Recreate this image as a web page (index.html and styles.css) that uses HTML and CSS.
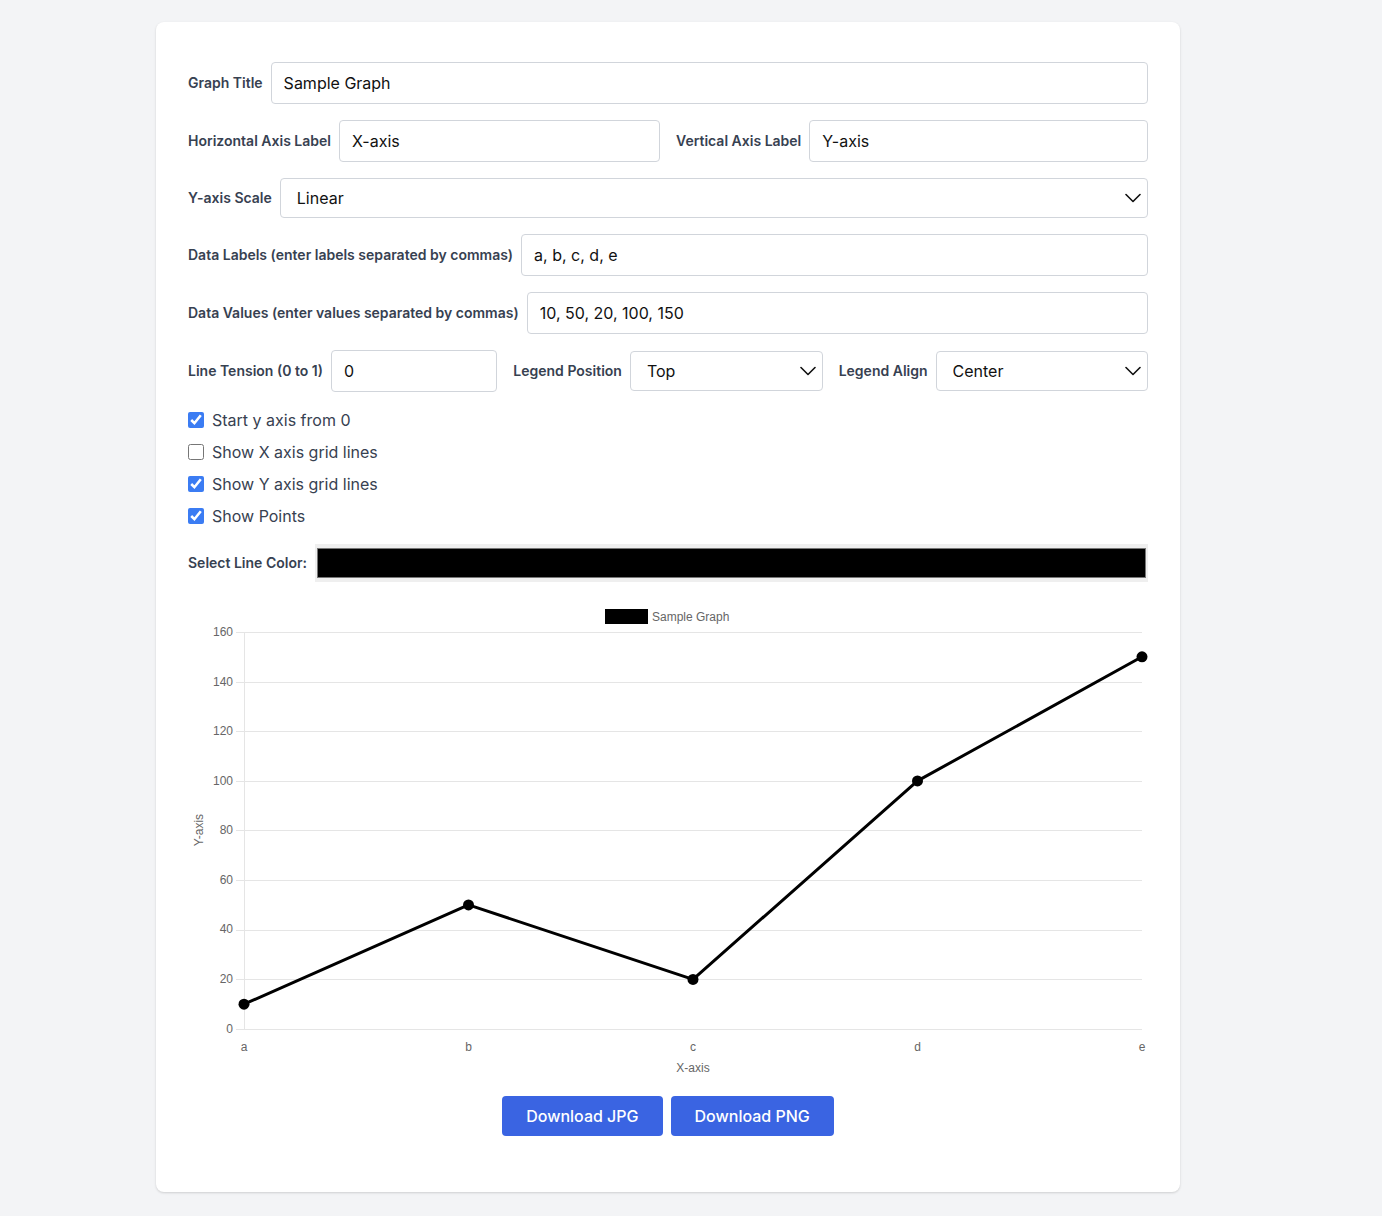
FILE: index.html
```html
<!DOCTYPE html>
<html lang="en">
<head>
<meta charset="utf-8">
<title>Graph Maker</title>
<link rel="stylesheet" href="styles.css">
</head>
<body>
<main class="card">
  <div class="row">
    <label class="lbl" for="title">Graph Title</label>
    <input class="field" id="title" type="text" value="Sample Graph">
  </div>
  <div class="row split">
    <div class="group">
      <label class="lbl" for="hx">Horizontal Axis Label</label>
      <input class="field" id="hx" type="text" value="X-axis">
    </div>
    <div class="group">
      <label class="lbl" for="vy">Vertical Axis Label</label>
      <input class="field" id="vy" type="text" value="Y-axis">
    </div>
  </div>
  <div class="row">
    <label class="lbl" for="scale">Y-axis Scale</label>
    <div class="select-wrap">
      <select class="sel" id="scale"><option>Linear</option><option>Logarithmic</option></select>
      <svg class="chev" width="16" height="10" viewBox="0 0 16 10"><path d="M1 1.5 L8 8.5 L15 1.5" fill="none" stroke="#111" stroke-width="1.6" stroke-linecap="round" stroke-linejoin="round"/></svg>
    </div>
  </div>
  <div class="row">
    <label class="lbl" for="dl">Data Labels (enter labels separated by commas)</label>
    <input class="field" id="dl" type="text" value="a, b, c, d, e">
  </div>
  <div class="row">
    <label class="lbl" for="dv">Data Values (enter values separated by commas)</label>
    <input class="field" id="dv" type="text" value="10, 50, 20, 100, 150">
  </div>
  <div class="row split">
    <div class="group">
      <label class="lbl" for="lt">Line Tension (0 to 1)</label>
      <input class="field" id="lt" type="text" value="0">
    </div>
    <div class="group">
      <label class="lbl" for="lp">Legend Position</label>
      <div class="select-wrap">
        <select class="sel" id="lp"><option>Top</option><option>Bottom</option></select>
        <svg class="chev" width="16" height="10" viewBox="0 0 16 10"><path d="M1 1.5 L8 8.5 L15 1.5" fill="none" stroke="#111" stroke-width="1.6" stroke-linecap="round" stroke-linejoin="round"/></svg>
      </div>
    </div>
    <div class="group">
      <label class="lbl" for="la">Legend Align</label>
      <div class="select-wrap">
        <select class="sel" id="la"><option>Center</option><option>Start</option></select>
        <svg class="chev" width="16" height="10" viewBox="0 0 16 10"><path d="M1 1.5 L8 8.5 L15 1.5" fill="none" stroke="#111" stroke-width="1.6" stroke-linecap="round" stroke-linejoin="round"/></svg>
      </div>
    </div>
  </div>
  <div class="checks">
    <label class="check"><input type="checkbox" checked><span>Start y axis from 0</span></label>
    <label class="check"><input type="checkbox"><span>Show X axis grid lines</span></label>
    <label class="check"><input type="checkbox" checked><span>Show Y axis grid lines</span></label>
    <label class="check"><input type="checkbox" checked><span>Show Points</span></label>
  </div>
  <div class="row">
    <label class="lbl" for="lc">Select Line Color:</label>
    <input class="color" id="lc" type="color" value="#000000">
  </div>

  <svg class="chart" width="960" height="480" viewBox="0 0 960 480">
    <g class="legend">
      <rect x="418.5" y="12.5" width="40" height="12" fill="#000" stroke="#000" stroke-width="3"/>
      <text x="464" y="22.5" class="tick">Sample Graph</text>
    </g>
    <g stroke="#e5e5e5" stroke-width="1">
      <line x1="48" y1="34.5" x2="954" y2="34.5"/>
      <line x1="48" y1="84.5" x2="954" y2="84.5"/>
      <line x1="48" y1="133.5" x2="954" y2="133.5"/>
      <line x1="48" y1="183.5" x2="954" y2="183.5"/>
      <line x1="48" y1="232.5" x2="954" y2="232.5"/>
      <line x1="48" y1="282.5" x2="954" y2="282.5"/>
      <line x1="48" y1="332.5" x2="954" y2="332.5"/>
      <line x1="48" y1="381.5" x2="954" y2="381.5"/>
      <line x1="48" y1="431.5" x2="954" y2="431.5"/>
      <line x1="56.5" y1="34" x2="56.5" y2="432"/>
    </g>
    <g class="tick" text-anchor="end">
      <text x="45" y="38">160</text>
      <text x="45" y="87.5">140</text>
      <text x="45" y="137">120</text>
      <text x="45" y="186.5">100</text>
      <text x="45" y="236">80</text>
      <text x="45" y="285.5">60</text>
      <text x="45" y="335">40</text>
      <text x="45" y="384.5">20</text>
      <text x="45" y="434.5">0</text>
    </g>
    <g class="tick" text-anchor="middle">
      <text x="56" y="453">a</text>
      <text x="280.5" y="453">b</text>
      <text x="505" y="453">c</text>
      <text x="729.5" y="453">d</text>
      <text x="954" y="453">e</text>
      <text x="505" y="474">X-axis</text>
      <text x="0" y="0" transform="translate(15 232) rotate(-90)">Y-axis</text>
    </g>
    <polyline points="56,406.2 280.5,306.9 505,381.4 729.5,182.9 954,58.8" fill="none" stroke="#000" stroke-width="3" stroke-linejoin="round"/>
    <g fill="#000">
      <circle cx="56" cy="406.2" r="5.5"/>
      <circle cx="280.5" cy="306.9" r="5.5"/>
      <circle cx="505" cy="381.4" r="5.5"/>
      <circle cx="729.5" cy="182.9" r="5.5"/>
      <circle cx="954" cy="58.8" r="5.5"/>
    </g>
  </svg>

  <div class="actions">
    <button class="btn" type="button">Download JPG</button>
    <button class="btn" type="button">Download PNG</button>
  </div>
</main>
</body>
</html>
```

FILE: styles.css
```css
* { box-sizing: border-box; }

html, body {
  margin: 0;
  padding: 0;
  background: #f3f4f6;
  font-family: Inter, "Noto Sans", "Liberation Sans", sans-serif;
}

body {
  padding: 22px 0 24px;
}

.card {
  width: 1024px;
  margin: 0 0 0 156px;
  background: #fff;
  border-radius: 8px;
  box-shadow: 0 1px 3px rgba(0, 0, 0, 0.1), 0 1px 2px rgba(0, 0, 0, 0.06);
  padding: 40px 32px 56px;
}

.row {
  display: flex;
  align-items: center;
  gap: 8px;
  margin-bottom: 16px;
}

.row.split {
  gap: 16px;
}

.group {
  flex: 1 1 0;
  min-width: 0;
  display: flex;
  align-items: center;
  gap: 8px;
}

.lbl {
  font-size: 14px;
  font-weight: 600;
  color: #374151;
  white-space: nowrap;
  line-height: 20px;
}

.field {
  flex: 1 1 auto;
  min-width: 0;
  height: 42px;
  border: 1px solid #d1d5db;
  border-radius: 4px;
  padding: 8px 12px;
  font-family: inherit;
  font-size: 16px;
  line-height: 24px;
  color: #111;
  background: #fff;
  margin: 0;
}

.select-wrap {
  position: relative;
  flex: 1 1 auto;
  min-width: 0;
}

.sel {
  appearance: none;
  -webkit-appearance: none;
  width: 100%;
  height: 40px;
  border: 1px solid #d1d5db;
  border-radius: 4px;
  padding: 0 40px 0 16px;
  font-family: inherit;
  font-size: 16px;
  color: #111;
  background: #fff;
  margin: 0;
}

.chev {
  position: absolute;
  right: 7px;
  top: 15px;
  pointer-events: none;
}

.checks {
  display: flex;
  flex-direction: column;
  gap: 8px;
  margin-bottom: 16px;
}

.check {
  display: flex;
  align-items: center;
  gap: 8px;
  font-size: 16px;
  line-height: 24px;
  color: #374151;
}

.check input {
  width: 16px;
  height: 16px;
  margin: 0;
  accent-color: #3b7cf3;
}

.color {
  flex: 1 1 auto;
  height: 38px;
  border: 0;
  padding: 0;
  margin: 0;
  background: #efefef;
  -webkit-appearance: none;
  appearance: none;
}

.color::-webkit-color-swatch-wrapper {
  padding: 4px 2px;
}

.color::-webkit-color-swatch {
  border: 1px solid #777;
  border-radius: 0;
}

.chart {
  display: block;
  margin: 0 0 18px;
}

.tick {
  font-family: "Liberation Sans", Helvetica, Arial, sans-serif;
  font-size: 12px;
  fill: #666;
}

.actions {
  display: flex;
  justify-content: center;
  gap: 8px;
}

.btn {
  background: #3a64e2;
  color: #fff;
  border: 0;
  border-radius: 4px;
  padding: 8px 24px;
  font-family: inherit;
  font-size: 16px;
  font-weight: 500;
  line-height: 24px;
  cursor: pointer;
}
```
